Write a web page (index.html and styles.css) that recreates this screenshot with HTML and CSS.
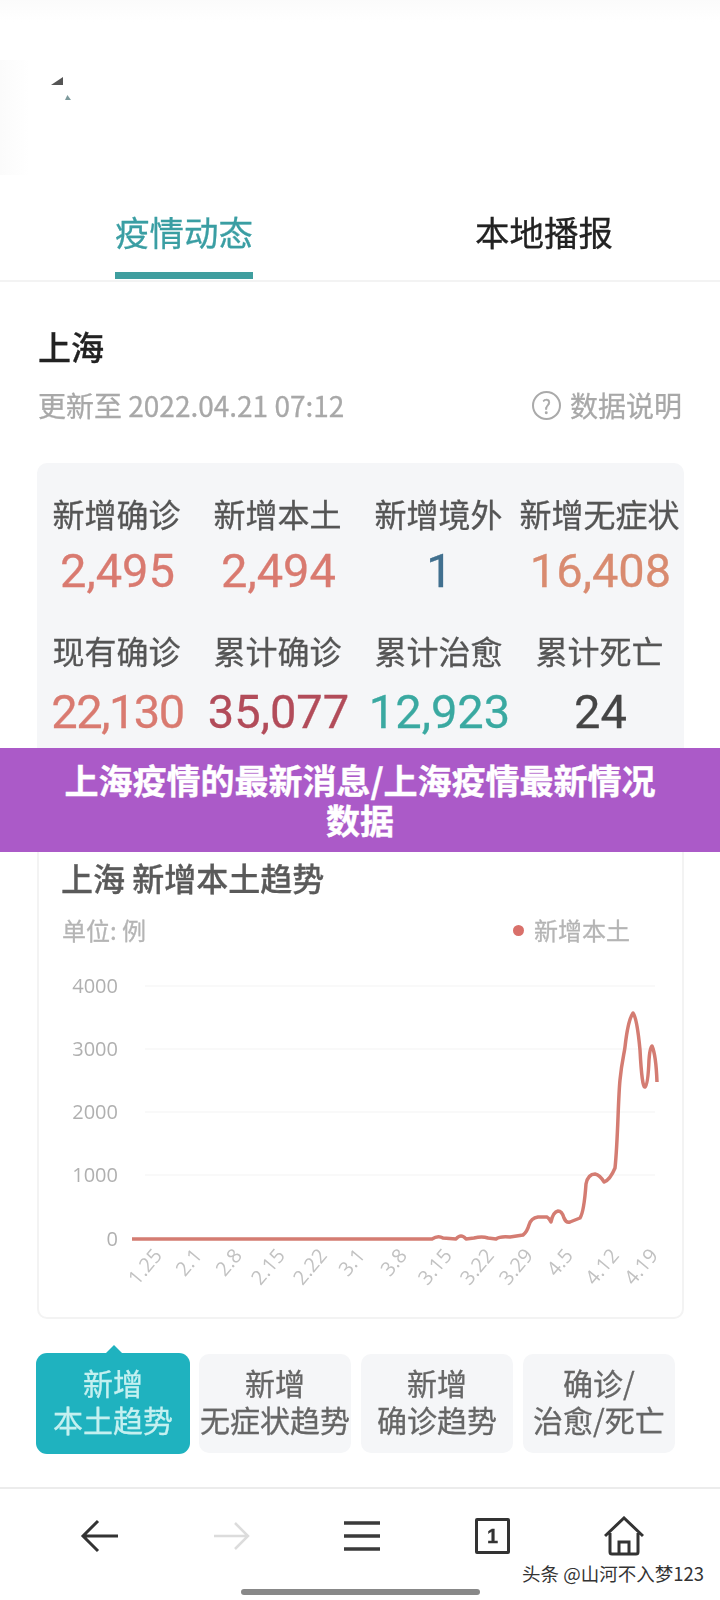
FILE: index.html
```html
<!DOCTYPE html>
<html lang="zh-CN">
<head>
    <meta charset="UTF-8" />
    <meta name="viewport" content="width=device-width, initial-scale=1.0"/>
    <title>上海疫情的最新消息</title>
    <link rel="stylesheet" href="styles.css">
</head>
<body>
<div class="shot">
    <div class="top-area">
        <span class="speck speck-a"></span>
        <span class="speck speck-b"></span>
    </div>

    <div class="tabs">
        <div class="tab tab-active"><span>疫情动态</span></div>
        <div class="tab"><span>本地播报</span></div>
    </div>

    <div class="city">
        <h2>上海</h2>
        <div class="city-meta">
            <span>更新至 2022.04.21 07:12</span>
            <span class="data-note"><i class="help">?</i>数据说明</span>
        </div>
    </div>

    <div class="stats">
        <div class="stat"><div class="stat-label">新增确诊</div><div class="stat-num red">2,495</div></div>
        <div class="stat"><div class="stat-label">新增本土</div><div class="stat-num red">2,494</div></div>
        <div class="stat"><div class="stat-label">新增境外</div><div class="stat-num blue">1</div></div>
        <div class="stat"><div class="stat-label">新增无症状</div><div class="stat-num orange">16,408</div></div>
        <div class="stat stat-low"><div class="stat-label">现有确诊</div><div class="stat-num red tight">22,130</div></div>
        <div class="stat stat-low"><div class="stat-label">累计确诊</div><div class="stat-num dark-red">35,077</div></div>
        <div class="stat stat-low"><div class="stat-label">累计治愈</div><div class="stat-num teal">12,923</div></div>
        <div class="stat stat-low"><div class="stat-label">累计死亡</div><div class="stat-num grey">24</div></div>
    </div>

    <div class="chart-card">
        <h3>上海 新增本土趋势</h3>
        <div class="chart-meta">
            <span>单位: 例</span>
            <span class="legend"><i class="legend-dot"></i>新增本土</span>
        </div>
        <svg class="chart" viewBox="38 948 645 369" width="645" height="369">
            <g stroke="#f7f7f7" stroke-width="1.5">
                <line x1="145" y1="986" x2="655" y2="986"/>
                <line x1="145" y1="1049" x2="655" y2="1049"/>
                <line x1="145" y1="1112" x2="655" y2="1112"/>
                <line x1="145" y1="1175" x2="655" y2="1175"/>
            </g>
            <g class="y-labels" text-anchor="end">
                <text x="118" y="993">4000</text>
                <text x="118" y="1056">3000</text>
                <text x="118" y="1119">2000</text>
                <text x="118" y="1182">1000</text>
                <text x="118" y="1246">0</text>
            </g>
            <g class="x-labels" text-anchor="end">
                <text transform="translate(163 1256) rotate(-50)">1.25</text>
                <text transform="translate(203 1256) rotate(-50)">2.1</text>
                <text transform="translate(243 1256) rotate(-50)">2.8</text>
                <text transform="translate(286 1256) rotate(-50)">2.15</text>
                <text transform="translate(328 1256) rotate(-50)">2.22</text>
                <text transform="translate(366 1256) rotate(-50)">3.1</text>
                <text transform="translate(408 1256) rotate(-50)">3.8</text>
                <text transform="translate(453 1256) rotate(-50)">3.15</text>
                <text transform="translate(495 1256) rotate(-50)">3.22</text>
                <text transform="translate(534 1256) rotate(-50)">3.29</text>
                <text transform="translate(574 1256) rotate(-50)">4.5</text>
                <text transform="translate(620 1256) rotate(-50)">4.12</text>
                <text transform="translate(659 1256) rotate(-50)">4.19</text>
            </g>
            <path class="trend" d="M132 1239 L432 1239 Q438 1235 443 1238 L456 1239 Q461 1233 466 1239 L474 1238 Q482 1236 488 1238 L496 1239 Q500 1236 510 1237 L523 1235 Q527 1232 529 1225 Q531 1218 538 1217 L547 1217 Q549 1218 551 1222 Q553 1212 558 1211 Q562 1211 564 1218 Q566 1223 570 1222 L580 1218 Q584 1212 586 1184 Q588 1174 595 1174 Q600 1175 604 1182 Q610 1180 615 1168 C618 1140 618 1100 620 1080 C622 1060 624 1055 625 1047 Q628 1020 633 1013 Q637 1018 640 1050 Q642 1088 645 1087 Q648 1085 649 1060 Q650 1046 652 1046 Q656 1055 657 1082"/>
        </svg>
    </div>

    <div class="trend-btns">
        <div class="trend-btn trend-btn-active">新增<br>本土趋势</div>
        <div class="trend-btn">新增<br>无症状趋势</div>
        <div class="trend-btn">新增<br>确诊趋势</div>
        <div class="trend-btn">确诊/<br>治愈/死亡</div>
    </div>

    <div class="bottom-bar">
        <div class="nav-icons">
            <svg viewBox="0 0 40 40" width="40" height="40" fill="none" stroke="#333" stroke-width="3">
                <path d="M38 20H3M18 5L3 20l15 15"/>
            </svg>
            <svg viewBox="0 0 40 40" width="40" height="40" fill="none" stroke="#dcdcdc" stroke-width="2.5">
                <path d="M3 20h34M24 7l13 13-13 13"/>
            </svg>
            <svg viewBox="0 0 40 40" width="40" height="40" fill="none" stroke="#3a3a3a" stroke-width="3.5">
                <path d="M2 7h36M2 20h36M2 33h36"/>
            </svg>
            <div class="page-count">1</div>
            <svg viewBox="0 0 40 40" width="40" height="40" fill="none" stroke="#333" stroke-width="3">
                <path d="M1 20L20 2l19 18M6 17v19a2 2 0 0 0 2 2h24a2 2 0 0 0 2-2V17M15 38V26h10v12"/>
            </svg>
        </div>
        <div class="home-line"></div>
    </div>
</div>

<div class="banner">上海疫情的最新消息/上海疫情最新情况数据</div>
<div class="watermark">头条 @山河不入梦123</div>
</body>
</html>
```

FILE: styles.css
```css
* {
    box-sizing: border-box;
}
body {
    font-family: "Noto Sans CJK SC", "Noto Sans", sans-serif;
    background: #ffffff;
    margin: 0;
    padding: 0;
    width: 720px;
    height: 1600px;
    overflow: hidden;
    position: relative;
}
.shot {
    filter: blur(0.6px);
    -webkit-text-stroke: 0.3px;
}
.top-area {
    position: relative;
    height: 175px;
    background:
        linear-gradient(90deg, #fbfbfb 0, #ffffff 30px) 0 60px / 100% 115px no-repeat,
        linear-gradient(180deg, #fbfbfb 0, #ffffff 22px);
}
.speck {
    position: absolute;
    background: #555;
}
.speck-a {
    left: 51px;
    top: 77px;
    width: 12px;
    height: 8px;
    clip-path: polygon(100% 0, 100% 100%, 0 100%);
}
.speck-b {
    left: 65px;
    top: 95px;
    width: 6px;
    height: 5px;
    background: #7d9a9c;
    clip-path: polygon(40% 0, 100% 100%, 0 100%);
}

.tabs {
    display: grid;
    grid-template-columns: 360px 360px;
    padding-left: 4px;
    height: 107px;
    border-bottom: 2px solid #f3f3f3;
}
.tab {
    text-align: center;
    font-size: 34.5px;
    line-height: 50px;
    padding-top: 31px;
    color: #222;
}
.tab span {
    display: inline-block;
    height: 73px;
}
.tab-active {
    color: #3a9ea3;
}
.tab-active span {
    border-bottom: 7px solid #3f9e9f;
}

.city {
    padding: 42px 38px 0 38px;
}
.city h2 {
    margin: 0;
    font-size: 33px;
    line-height: 44px;
    font-weight: 500;
    color: #222;
}
.city-meta {
    display: flex;
    justify-content: space-between;
    margin-top: 19px;
    font-size: 28px;
    line-height: 36px;
    color: #a8a8a8;
}
.data-note {
    display: flex;
    align-items: center;
}
.help {
    width: 29px;
    height: 29px;
    margin-right: 9px;
    border: 2px solid #aaa;
    border-radius: 50%;
    font-size: 19px;
    line-height: 25px;
    font-style: normal;
    text-align: center;
}

.stats {
    display: grid;
    grid-template-columns: repeat(4, 161px);
    row-gap: 34px;
    align-content: start;
    margin: 40px 36px 0 37px;
    height: 300px;
    padding-top: 30px;
    background: #f5f6f8;
    border-radius: 10px;
}
.stat {
    text-align: center;
    white-space: nowrap;
}
.stat-label {
    font-size: 32px;
    line-height: 40px;
    color: #555;
    margin-left: -2px;
}
.stat-num {
    margin-top: 13px;
    font-family: Roboto, sans-serif;
    font-size: 47px;
    line-height: 50px;
}
.stat-low .stat-num {
    margin-top: 17px;
}
.tight {
    letter-spacing: -1.5px;
}
.red { color: #d97a70; }
.orange { color: #d98b70; }
.blue { color: #41708f; }
.dark-red { color: #b24c5a; }
.teal { color: #3aa9a1; }
.grey { color: #454545; }

.chart-card {
    margin: 70px 36px 0 37px;
    height: 486px;
    border: 2px solid #f3f3f3;
    border-radius: 10px;
}
.chart-card h3 {
    margin: 22px 0 0 22px;
    font-size: 32px;
    line-height: 40px;
    font-weight: 500;
    color: #5a5a5a;
}
.chart-meta {
    display: flex;
    justify-content: space-between;
    margin: 17px 52px 0 23px;
    font-size: 24px;
    line-height: 32px;
    color: #b5b5b5;
}
.legend {
    display: flex;
    align-items: center;
}
.legend-dot {
    width: 11px;
    height: 11px;
    margin-right: 10px;
    background: #d9706a;
    border-radius: 50%;
}
.chart {
    display: block;
    margin: 2px 0 0 -1px;
}
.y-labels text {
    font-family: "Open Sans", sans-serif;
    font-size: 20px;
    fill: #b0b0b0;
}
.x-labels text {
    font-family: "Open Sans", sans-serif;
    font-size: 20px;
    fill: #c2c2c2;
}
.trend {
    fill: none;
    stroke: #d47c72;
    stroke-width: 3.5;
    stroke-linejoin: round;
}

.trend-btns {
    display: grid;
    grid-template-columns: repeat(4, 152px);
    column-gap: 10px;
    margin: 35px 0 0 37px;
}
.trend-btn {
    position: relative;
    height: 99px;
    padding-top: 10px;
    background: #f5f6f8;
    border-radius: 10px;
    color: #666;
    font-size: 30px;
    line-height: 37px;
    text-align: center;
    white-space: nowrap;
}
.trend-btn-active {
    background: #1fb2bf;
    color: #c4f0f0;
    box-shadow: 0 0 0 1px #1fb2bf;
}
.trend-btn-active::before {
    content: "";
    position: absolute;
    left: 68px;
    top: -9px;
    border-left: 9px solid transparent;
    border-right: 9px solid transparent;
    border-bottom: 9px solid #1fb2bf;
}

.bottom-bar {
    margin-top: 34px;
    border-top: 2px solid #ececec;
}
.nav-icons {
    display: grid;
    grid-template-columns: repeat(5, 131px);
    justify-items: center;
    align-items: center;
    padding: 27px 0 0 34px;
}
.page-count {
    width: 35px;
    height: 36px;
    border: 3px solid #333;
    border-radius: 2px;
    font-family: "Liberation Sans", sans-serif;
    font-size: 20px;
    font-weight: 700;
    line-height: 30px;
    text-align: center;
    color: #333;
}
.home-line {
    width: 239px;
    height: 6px;
    margin: 33px auto 0;
    background: #888;
    border-radius: 3px;
}

.banner {
    position: absolute;
    left: 0;
    top: 748px;
    width: 720px;
    height: 104px;
    padding: 12px 60px;
    background: #ab5ac8;
    color: #ffffff;
    font-size: 34px;
    font-weight: 700;
    line-height: 40px;
    text-align: center;
    -webkit-text-stroke: 0.4px #fff;
}
.watermark {
    position: absolute;
    right: 16px;
    top: 1559px;
    font-size: 18.5px;
    line-height: 28px;
    color: #333;
    text-shadow: 0 0 3px #fff;
    white-space: nowrap;
}
```
